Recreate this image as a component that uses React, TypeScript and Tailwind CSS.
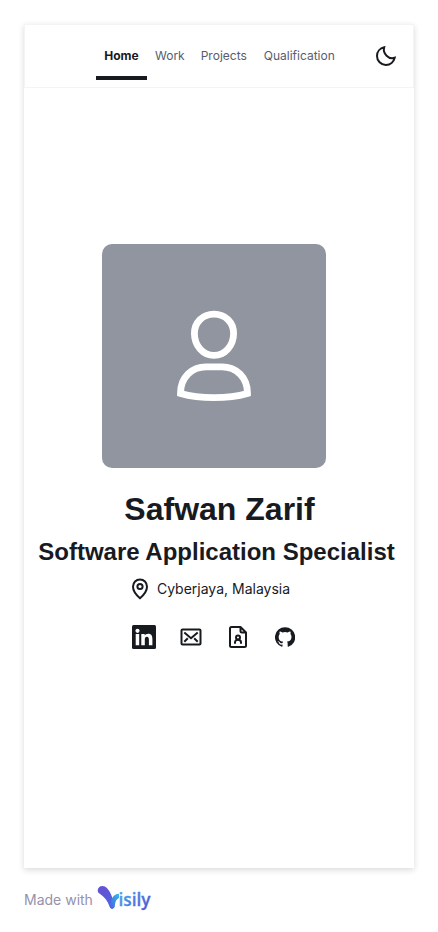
import React from "react";

const tabs = ["Home", "Work", "Projects", "Qualification"];

function Moon() {
  return (
    <svg width="24" height="24" viewBox="0 0 24 24" fill="none" stroke="#171a1f" strokeWidth="2">
      <path d="M10.200 3.300C6 4.200 3 7.600 3 11.900C3 16.900 6.900 20.900 11.900 20.900C16.200 20.900 19.800 17.900 20.700 13.800C17.900 14.800 14.900 14.100 12.600 11.800C10.300 9.500 9.400 6.200 10.200 3.300Z" />
    </svg>
  );
}

function Person() {
  return (
    <svg width="76" height="94" viewBox="0 0 76 94" fill="none" stroke="#fff" strokeWidth="6.800" className="mt-[2px]">
      <path d="M38 4.200C49.500 4.200 57.600 12.500 57.600 23.500C57.600 35.500 49 45.400 38 45.400C27 45.400 18.400 35.500 18.400 23.500C18.400 12.500 26.500 4.200 38 4.200Z" />
      <path d="M30 56.900H46C60 56.900 71.500 67 71.500 83.400C52 89 24 89 4.500 83.400C4.500 67 16 56.900 30 56.900Z" />
    </svg>
  );
}

function Pin() {
  return (
    <svg width="24" height="24" viewBox="0 0 24 24" fill="none" stroke="#171a1f" strokeWidth="2">
      <path d="M12 21.200C9 18.600 5 14.500 5 9.700C5 5.500 8.100 2.500 12 2.500C15.900 2.500 19 5.500 19 9.700C19 14.500 15 18.600 12 21.200Z" />
      <circle cx="12" cy="9.500" r="2.600" />
    </svg>
  );
}

function LinkedIn() {
  return (
    <svg width="24" height="24" viewBox="0 0 24 24">
      <rect width="24" height="24" rx="1.500" fill="#171a1f" />
      <circle cx="5.500" cy="5.800" r="2.100" fill="#fff" />
      <path d="M3.700 9.100H7.200V20.300H3.700ZM9.300 9.100H12.700V10.600C13.400 9.500 14.500 8.800 16.200 8.800C19.500 8.800 20.400 10.900 20.400 14.200V20.300H16.900V14.900C16.900 13.200 16.600 11.800 14.900 11.800C13.300 11.800 12.800 13 12.800 14.800V20.300H9.300Z" fill="#fff" />
    </svg>
  );
}

function Mail() {
  return (
    <svg width="24" height="24" viewBox="0 0 24 24" fill="none" stroke="#171a1f" strokeWidth="2">
      <rect x="2.500" y="4.500" width="19" height="15" rx="1" />
      <path d="M5.300 7.500L12 13.300L18.700 7.500M5.300 16.800L8.800 13.300M18.700 16.800L15.200 13.300" />
    </svg>
  );
}

function Resume() {
  return (
    <svg width="24" height="24" viewBox="0 0 24 24" fill="none" stroke="#171a1f" strokeWidth="2" strokeLinejoin="round">
      <path d="M14.500 2H5.500C4.500 2 4 2.500 4 3.500V20.500C4 21.500 4.500 22 5.500 22H18.500C19.500 22 20 21.500 20 20.500V7.500L14.500 2V6C14.500 7 15 7.500 16 7.500H20" />
      <circle cx="12" cy="12.500" r="2" />
      <path d="M9 18.800V17.500C9 15.800 10 14.800 12 14.800C14 14.800 15 15.800 15 17.500V18.800" />
    </svg>
  );
}

function GitHub() {
  return (
    <svg width="20" height="20" viewBox="0 0 24 24" fill="#171a1f">
      <path d="M12 .300a12 12 0 0 0-3.800 23.400c.6.100.800-.3.800-.6v-2c-3.300.7-4-1.600-4-1.600-.6-1.400-1.400-1.800-1.400-1.800-1-.7.100-.7.100-.7 1.200.1 1.900 1.200 1.900 1.200 1 1.800 2.800 1.300 3.500 1 .1-.8.400-1.300.800-1.600-2.700-.3-5.500-1.300-5.500-6 0-1.200.5-2.300 1.300-3.100-.2-.4-.6-1.600 0-3.200 0 0 1-.3 3.400 1.200a11.500 11.500 0 0 1 6 0c2.300-1.500 3.300-1.200 3.300-1.200.7 1.600.300 2.800.1 3.200.8.800 1.300 1.900 1.300 3.200 0 4.600-2.800 5.600-5.500 5.900.5.400.9 1 .9 2.200v3.300c0 .3.100.7.800.6A12 12 0 0 0 12 .300" />
    </svg>
  );
}

function Visily() {
  return (
    <svg width="56" height="28" viewBox="0 0 56 28" className="mb-[5px] ml-1">
      <defs>
        <linearGradient id="wing" x1="0" y1="0" x2="1" y2="1">
          <stop offset="0.300" stopColor="#6255d5" />
          <stop offset="1" stopColor="#4668e4" />
        </linearGradient>
        <linearGradient id="stem" x1="1" y1="0" x2="0" y2="1">
          <stop offset="0" stopColor="#35b8ec" />
          <stop offset="1" stopColor="#4860df" />
        </linearGradient>
        <linearGradient id="word" x1="0" y1="0" x2="1" y2="0.500">
          <stop offset="0" stopColor="#40aceb" />
          <stop offset="1" stopColor="#5261da" />
        </linearGradient>
      </defs>
      <path d="M.700 6.500C.700 3.800 2.700 2 5.500 2C9.500 2 12.500 6.500 14.700 12L17.600 22.300C17.200 25.500 13.300 25.500 12.500 22.300C10.500 17 7.500 13 3.800 10.500C1.700 9.200 .700 8.400 .700 6.500Z" fill="url(#wing)" />
      <path d="M22 9.700C18 9.800 15.300 12.500 14 17L12.700 22.300C13.200 25.400 16.900 25.400 17.700 22.300C18.300 18.500 18.700 15.500 22 14Z" fill="url(#stem)" />
      <text x="21.500" y="22" fill="url(#word)" stroke="url(#word)" strokeWidth="0.300" fontFamily="Open Sans, sans-serif" fontSize="18" fontWeight="600" textLength="32" lengthAdjust="spacingAndGlyphs">isily</text>
    </svg>
  );
}

export default function App() {
  return (
    <div className="h-[932px] w-[438px] bg-white px-6 pt-6 font-['Inter',sans-serif] text-[#171a1f]">
      <main className="h-[844px] w-[390px] bg-white shadow-[0_2px_6px_rgba(23,26,31,0.16)]">
        <header className="flex h-16 items-center border border-[#f3f4f6] pl-[71px]">
          <nav className="flex h-12 w-[264px] text-xs leading-5">
            {tabs.map((tab, i) => (
              <a
                key={tab}
                className={i === 0
                  ? "flex h-12 w-[51px] items-center justify-center border-b-4 border-[#171a1f] pt-1 font-bold"
                  : "flex h-12 items-center px-2 text-[#565d6d] last:pl-[9px]"}
              >
                {tab}
              </a>
            ))}
          </nav>
          <span className="ml-[14px]"><Moon /></span>
        </header>

        <section className="flex flex-col items-center pt-[156px] pr-[10px]">
          <div className="flex size-56 items-center justify-center rounded-[10px] bg-[#9095a0]">
            <Person />
          </div>
          <h1 className="mt-[17px] ml-[11px] font-['Liberation_Sans',sans-serif] text-[32px] leading-[48px] font-bold">Safwan Zarif</h1>
          <h2 className="mt-px ml-[5px] font-['Liberation_Sans',sans-serif] text-2xl leading-9 font-bold whitespace-nowrap">Software Application Specialist</h2>
          <div className="mt-[7px] mr-[10px] flex items-center gap-[5px] text-sm leading-[22px]">
            <Pin />
            <span>Cyberjaya, Malaysia</span>
          </div>
          <div className="mt-6 mr-[2px] flex items-center">
            <LinkedIn />
            <span className="ml-[23px]"><Mail /></span>
            <span className="ml-[23px]"><Resume /></span>
            <span className="ml-[25px]"><GitHub /></span>
          </div>
        </section>
      </main>
      <footer className="mt-4 flex h-8 items-center text-sm text-[#9691ad]">
        <span>Made with</span>
        <Visily />
      </footer>
    </div>
  );
}
